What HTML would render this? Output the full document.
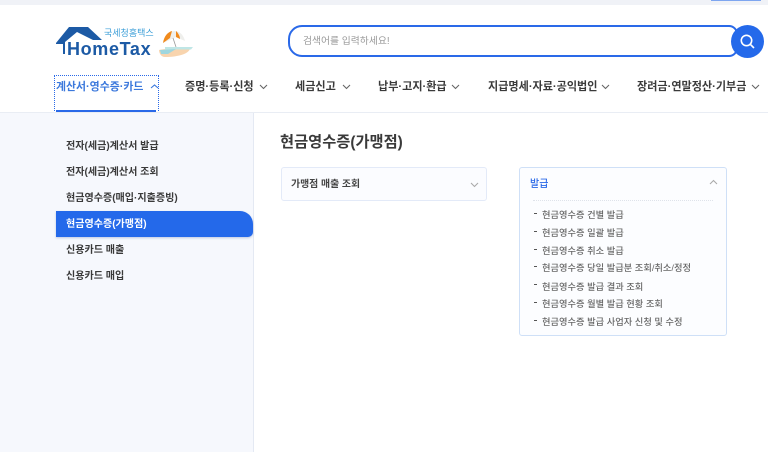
<!DOCTYPE html>
<html lang="ko"><head><meta charset="utf-8"><style>
html,body{margin:0;padding:0}
body{width:768px;height:452px;overflow:hidden;position:relative;background:#fff;font-family:"Liberation Sans","Noto Sans CJK KR",sans-serif}
.a{position:absolute;white-space:nowrap;line-height:16px}
.n{font-size:11.1px;font-weight:700;color:#3a3a3a;top:79px}
.s{font-size:10.05px;font-weight:700;color:#3a3a3a;left:66px}
.l{font-size:9.25px;font-weight:500;color:#666;left:542px}
.d{position:absolute;left:534px;width:3px;height:1px;background:#555}
svg{position:absolute;overflow:visible}
</style></head><body>
<div style="position:absolute;left:0;top:0;width:768px;height:5px;background:#f0f2f7"></div>
<div style="position:absolute;left:711px;top:0;width:50px;height:1px;background:#7ea6f0"></div>
<svg style="left:0;top:0" width="200" height="60"><path d="M56 43 L69 27 H88 L102 40 H93 L77 32 L65 42 V54 H63 V44 H56 Z" fill="#1c5aa5"/></svg>
<div class="a" style="left:67px;top:38px;font-size:18px;line-height:22px;font-weight:700;color:#1c5aa5;letter-spacing:.65px">HomeTax</div>
<div class="a" style="left:104px;top:26px;font-size:9px;line-height:14px;color:#3d9fd8">국세청홈택스</div>
<svg style="left:0;top:0" width="200" height="60"><path d="M163 43 C164 35 169 31 175 31 C180 31 184 36 185 41 L176 37 Z" fill="#efefec"/><path d="M163 43 C164 36 168 32 172 31 L170 38 Z" fill="#f08a1d"/><path d="M176 31 C178 33 180 36 180 39 L176 37 Z" fill="#f08a1d"/><path d="M173 38 L176 47" stroke="#999" stroke-width=".8"/><path d="M159 50 C168 48 182 49 190 49 C188 54 178 57 165 57 C161 57 159 53 159 50 Z" fill="#f8d4ae"/><path d="M165 47 H193 L191 49.500 H165 Z" fill="#bfe6e6"/><path d="M160 50 L176 49 L168 54 H161 Z" fill="#9fd6de"/></svg>
<div style="position:absolute;left:288px;top:25px;width:450px;height:32px;box-sizing:border-box;border:2px solid #2a69e8;border-radius:14px 9px 9px 14px"></div>
<div class="a" style="left:303px;top:34px;font-size:9.800px;color:#999">검색어를 입력하세요!</div>
<div style="position:absolute;left:731px;top:24.500px;width:33px;height:33px;border-radius:50%;background:#2469ea"></div>
<svg style="left:731px;top:24.500px" width="33" height="33" fill="none" stroke="#fff" stroke-width="1.600"><circle cx="15.500" cy="15.500" r="5.200"/><path d="M19.300 19.300 L23 23"/></svg>
<div style="position:absolute;left:54px;top:75px;width:105px;height:38px;box-sizing:border-box;border:1px dotted #2a69e8"></div>
<div style="position:absolute;left:56px;top:110px;width:100px;height:2px;background:#2a69e8"></div>
<div class="a n" style="left:56px;color:#3b78dc;font-size:10.900px">계산서·영수증·카드</div>
<div class="a n" style="left:185px">증명·등록·신청</div>
<div class="a n" style="left:295px">세금신고</div>
<div class="a n" style="left:378px">납부·고지·환급</div>
<div class="a n" style="left:488px">지급명세·자료·공익법인</div>
<div class="a n" style="left:637px">장려금·연말정산·기부금</div>
<div style="position:absolute;left:0;top:112px;width:254px;height:340px;background:#f6f8fd;border-right:1px solid #e4e9f3;box-sizing:border-box"></div>
<div style="position:absolute;left:0;top:112px;width:768px;height:1px;background:#e9edf4"></div>
<div class="a s" style="top:139px">전자(세금)계산서 발급</div>
<div class="a s" style="top:165px">전자(세금)계산서 조회</div>
<div class="a s" style="top:191px">현금영수증(매입·지출증빙)</div>
<div style="position:absolute;left:56px;top:211px;width:197px;height:26px;background:#2469ea;border-radius:0 13px 5px 0;box-shadow:0 1px 2px rgba(60,90,160,.3)"></div>
<div class="a s" style="top:217px;color:#fff">현금영수증(가맹점)</div>
<div class="a s" style="top:243px">신용카드 매출</div>
<div class="a s" style="top:269px">신용카드 매입</div>
<div class="a" style="left:280px;top:133px;font-size:15.300px;line-height:20px;font-weight:700;color:#3a3a3a">현금영수증(가맹점)</div>
<div style="position:absolute;left:281px;top:167px;width:206px;height:34px;box-sizing:border-box;background:#fbfcff;border:1px solid #e3eaf8;border-radius:3px"></div>
<div class="a" style="left:291px;top:178px;font-size:9.900px;line-height:13px;font-weight:700;color:#444">가맹점 매출 조회</div>
<div style="position:absolute;left:519px;top:167px;width:208px;height:169px;box-sizing:border-box;background:#fcfdff;border:1px solid #cfe0f7;border-radius:3px"></div>
<div class="a" style="left:530px;top:178px;font-size:10px;line-height:13px;font-weight:500;color:#2a69e8">발급</div>
<div style="position:absolute;left:533px;top:200px;width:180px;border-top:1px dotted #dfe3ea"></div>
<div class="d" style="top:213px"></div><div class="a l" style="top:206.500px">현금영수증 건별 발급</div>
<div class="d" style="top:231px"></div><div class="a l" style="top:224.500px">현금영수증 일괄 발급</div>
<div class="d" style="top:249px"></div><div class="a l" style="top:242.500px">현금영수증 취소 발급</div>
<div class="d" style="top:266px"></div><div class="a l" style="top:259.500px">현금영수증 당일 발급분 조회/취소/정정</div>
<div class="d" style="top:284px"></div><div class="a l" style="top:278.500px">현금영수증 발급 결과 조회</div>
<div class="d" style="top:302px"></div><div class="a l" style="top:295.500px">현금영수증 월별 발급 현황 조회</div>
<div class="d" style="top:320px"></div><div class="a l" style="top:313.500px">현금영수증 발급 사업자 신청 및 수정</div>
<svg style="left:0;top:0" width="768" height="200" fill="none" stroke="#666" stroke-width="1.100"><path d="M151 88 L154.500 85 L158 88" stroke="#3b78dc"/><path d="M260 85 L263.500 88.500 L267 85"/><path d="M343 85 L346.500 88.500 L350 85"/><path d="M452 85 L455.500 88.500 L459 85"/><path d="M602 85 L605.500 88.500 L609 85"/><path d="M752 85 L755.500 88.500 L759 85"/><path d="M471 183 L474.500 186.500 L478 183" stroke="#aaa"/><path d="M710 184 L713.500 180.500 L717 184" stroke="#aaa"/></svg>
</body></html>
